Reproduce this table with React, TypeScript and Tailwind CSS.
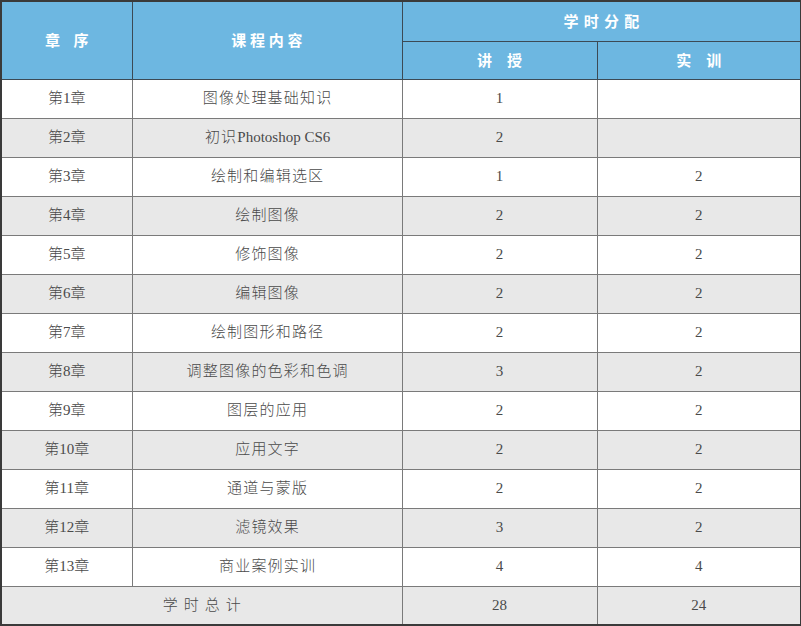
import type { ReactNode } from "react";

const rows: [string, ReactNode, string, string][] = [
  ["第1章", "图像处理基础知识", "1", ""],
  ["第2章", <>初识<span className="tracking-normal">Photoshop CS6</span></>, "2", ""],
  ["第3章", "绘制和编辑选区", "1", "2"],
  ["第4章", "绘制图像", "2", "2"],
  ["第5章", "修饰图像", "2", "2"],
  ["第6章", "编辑图像", "2", "2"],
  ["第7章", "绘制图形和路径", "2", "2"],
  ["第8章", "调整图像的色彩和色调", "3", "2"],
  ["第9章", "图层的应用", "2", "2"],
  ["第10章", "应用文字", "2", "2"],
  ["第11章", "通道与蒙版", "2", "2"],
  ["第12章", "滤镜效果", "3", "2"],
  ["第13章", "商业案例实训", "4", "4"],
];

const head =
  "border border-[#3c4a55] bg-[#6db7e1] text-center text-[15px] font-bold text-white font-['Noto_Sans_CJK_SC',sans-serif]";
const cell = "border border-[#7a7a7a] text-center text-[15px] font-light text-[#4a4a4a]";

export default function App() {
  return (
    <div className="h-[626px] w-[801px] bg-white">
      <table className="w-[800px] table-fixed border-collapse border-2 border-[#3a3a3a] font-['Liberation_Serif','Noto_Sans_CJK_SC',serif]">
        <colgroup>
          <col className="w-[131px]" />
          <col className="w-[270px]" />
          <col className="w-[195px]" />
          <col className="w-[204px]" />
        </colgroup>
        <thead>
          <tr className="h-[40px]">
            <th rowSpan={2} className={`${head} tracking-[0.9em] pl-[0.9em]`}>
              章序
            </th>
            <th rowSpan={2} className={`${head} tracking-[0.25em] pl-[0.25em]`}>
              课程内容
            </th>
            <th colSpan={2} className={`${head} tracking-[0.35em] pl-[0.35em]`}>
              学时分配
            </th>
          </tr>
          <tr className="h-[38px]">
            <th className={`${head} tracking-[1em] pl-[1em]`}>讲授</th>
            <th className={`${head} tracking-[1em] pl-[1em]`}>实训</th>
          </tr>
        </thead>
        <tbody>
          {rows.map((r, i) => (
            <tr key={r[0]} className={i % 2 === 1 ? "h-[39px] bg-[#e8e8e8]" : "h-[39px] bg-white"}>
              <td className={cell}>{r[0]}</td>
              <td className={`${cell} tracking-[0.08em] pl-[0.08em]`}>{r[1]}</td>
              <td className={cell}>{r[2]}</td>
              <td className={cell}>{r[3]}</td>
            </tr>
          ))}
          <tr className="h-[39px] bg-[#e8e8e8]">
            <td colSpan={2} className={`${cell} tracking-[0.4em] pl-[0.4em]`}>
              学时总计
            </td>
            <td className={cell}>28</td>
            <td className={cell}>24</td>
          </tr>
        </tbody>
      </table>
    </div>
  );
}
